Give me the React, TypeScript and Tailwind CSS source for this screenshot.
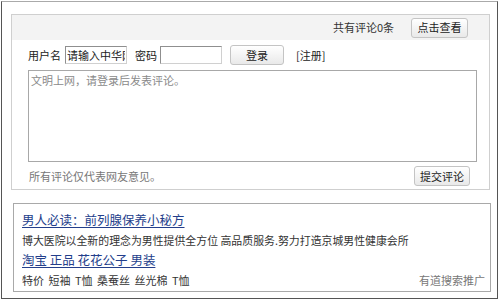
const FONT = "font-['Noto_Sans_CJK_SC','Noto_Sans',sans-serif]";

function GrayButton({ label, className }: { label: string; className: string }) {
  return (
    <button
      className={`flex items-center justify-center rounded-[3px] border border-[#c4c4c4] bg-gradient-to-b from-white to-[#e9e9e9] text-[11px] leading-none text-[#222] ${className}`}
    >
      {label}
    </button>
  );
}

export default function App() {
  return (
    <div className={`h-[303px] w-[500px] bg-white ${FONT}`}>
      <div className="ml-[1px] mt-[1px] flex h-[298px] w-[497px] flex-col border border-[#555] border-t-[#aaa]">
        <div className="ml-[9px] mt-[12px] flex h-[176px] w-[479px] flex-col border border-[#cfcfcf]">
          <div className="flex h-[25px] items-center justify-end bg-[#f3f3f3] pr-[21px]">
            <span className="text-[11px] text-[#333]">共有评论0条</span>
            <GrayButton label="点击查看" className="ml-[17px] h-[20px] w-[57px]" />
          </div>

          <div className="mt-[5px] flex h-[20px] items-center pl-[16px] text-[11px] text-[#222]">
            <span>用户名</span>
            <input
              readOnly
              value="请输入中华网"
              className="ml-[4px] h-[18px] w-[62px] border border-[#8f8f8f] border-b-[#d0d0d0] border-r-[#d0d0d0] px-[1px] text-[11px] text-[#222] outline-none"
            />
            <span className="ml-[8px]">密码</span>
            <input
              readOnly
              className="ml-[3px] h-[18px] w-[62px] border border-[#8f8f8f] border-b-[#d0d0d0] border-r-[#d0d0d0] outline-none"
            />
            <GrayButton label="登录" className="ml-[8px] h-[20px] w-[54px]" />
            <span className="ml-[12px]">[注册]</span>
          </div>

          <textarea
            readOnly
            placeholder="文明上网，请登录后发表评论。"
            className="ml-[16px] mt-[5px] h-[92px] w-[449px] resize-none border border-[#a8a8a8] px-[2px] pt-[2px] text-[11px] leading-[14px] text-[#333] outline-none placeholder:text-[#8a8a8a]"
          />

          <div className="mt-[4px] flex h-[20px] items-center pl-[17px] pr-[19px]">
            <span className="text-[11px] text-[#777]">所有评论仅代表网友意见。</span>
            <GrayButton label="提交评论" className="ml-auto h-[20px] w-[56px]" />
          </div>
        </div>

        <div className="ml-[11px] mt-[13px] flex h-[89px] w-[478px] flex-col border border-[#a9a9a9] pl-[8px] pr-[5px] pt-[6px]">
          <a href="#" className="self-start text-[12.5px] leading-[20px] text-[#233e8b] underline underline-offset-2">
            男人必读：前列腺保养小秘方
          </a>
          <p className="text-[10.9px] leading-[20px] text-[#333]">
            博大医院以全新的理念为男性提供全方位 高品质服务.努力打造京城男性健康会所
          </p>
          <a
            href="#"
            className="self-start text-[12.5px] leading-[20px] text-[#233e8b] underline underline-offset-2"
          >
            淘宝 正品 花花公子 男装
          </a>
          <div className="flex items-center justify-between text-[11px] leading-[20px]">
            <span className="text-[#333] [word-spacing:2px]">特价 短袖 T恤 桑蚕丝 丝光棉 T恤</span>
            <span className="text-[#777]">有道搜索推广</span>
          </div>
        </div>
      </div>
    </div>
  );
}
